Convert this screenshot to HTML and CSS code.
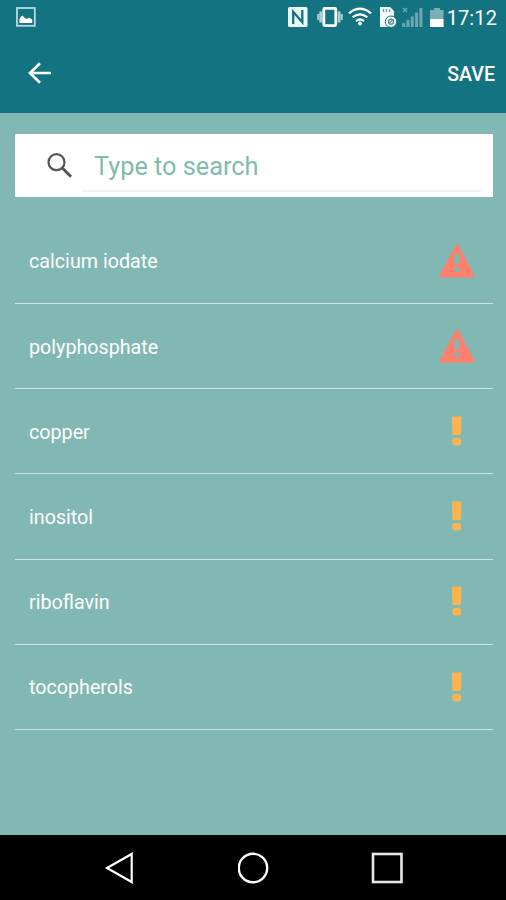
FILE: index.html
```html
<!DOCTYPE html>
<html lang="en">
<head>
<meta charset="utf-8">
<title>Ingredients</title>
<link rel="stylesheet" href="styles.css">
</head>
<body>
<div class="screen">
  <header class="header">
    <div class="status">
      <svg class="picture" width="20" height="20" viewBox="0 0 20 20"><rect x="1" y="1" width="17.8" height="17.8" fill="none" stroke="#b9d9dd" stroke-width="1.8"/><path d="M3.4 16V12L5 9.5 6.5 8.5 9 11 11 12 13 10.5 16.2 12.5V16Z" fill="#fff"/></svg>
      <div class="indicators">
        <svg width="20" height="20" viewBox="0 0 20 20"><rect width="19.5" height="20" rx="1.5" fill="#eaf5f6"/><path d="M5.2 17V4.8L14.3 15.2V3" fill="none" stroke="#137380" stroke-width="2.3"/></svg>
        <svg class="vibrate" width="26" height="20" viewBox="0 0 26 20"><rect x="6.8" y="1.4" width="12" height="17.2" rx="1" fill="none" stroke="#fff" stroke-width="2.8"/><path d="M3.7 4.5V15.5M22.1 4.5V15.5" stroke="#a9d0d5" stroke-width="2.8"/><path d="M1.2 7V13M24.7 7V13" stroke="#a9d0d5" stroke-width="2"/></svg>
        <svg class="wifi" width="24" height="20" viewBox="0 0 24 20"><g fill="none" stroke="#fff" stroke-width="2.3"><path d="M1 6.3Q12 -2.7 23 6.3"/><path d="M4.7 10.4Q12 4.4 19.3 10.4"/><path d="M8.1 14.1Q12 11 15.9 14.1"/></g><circle cx="12" cy="16.5" r="1.9" fill="#fff"/></svg>
        <svg class="card" width="18" height="20" viewBox="0 0 18 20"><path d="M0 0H10L14 4V20H0Z" fill="#f4fafb"/><path d="M3.5 2V5M6.5 2V5M9.5 2V5" stroke="#5c9ca5" stroke-width="1.2"/><circle cx="11" cy="14.7" r="5.7" fill="#fff" stroke="#137380" stroke-width="1"/><circle cx="11" cy="14.7" r="2.5" fill="none" stroke="#3f8b96" stroke-width="1.3"/><path d="M9.2 16.5L12.8 12.9" stroke="#3f8b96" stroke-width="1.1"/></svg>
        <svg class="signal" width="21" height="20" viewBox="0 0 21 20"><path d="M1.7 20V16M6 20V13M10.3 20V9.5M14.6 20V5.5M18.9 20V1" stroke="#6da8b0" stroke-width="3"/><path d="M1 1L5 5M5 1L1 5" stroke="#6da8b0" stroke-width="1.2"/></svg>
        <svg class="battery" width="14" height="20" viewBox="0 0 14 20"><path d="M0 3H4V1H10V3H13.5V20H0Z" fill="#79b0b7"/><path d="M0 12H13.5V20H0Z" fill="#fff"/></svg>
        <span class="clock">17:12</span>
      </div>
    </div>
    <div class="toolbar">
      <svg width="24" height="22" viewBox="0 0 24 22"><path d="M12 1.2L2 11 12 20.8M2.3 11H23" fill="none" stroke="#fff" stroke-width="2.7"/></svg>
      <span class="save">SAVE</span>
    </div>
  </header>
  <main class="content">
    <div class="search">
      <svg width="26" height="26" viewBox="0 0 26 26"><circle cx="9.5" cy="9.2" r="8" fill="none" stroke="#555" stroke-width="2.2"/><path d="M15.3 15L24 23.7" stroke="#555" stroke-width="3"/></svg>
      <div class="field">Type to search</div>
    </div>
    <ul class="list">
      <li><span>calcium iodate</span><svg width="36" height="34" viewBox="0 0 36 34"><path d="M18 2L34 32H2Z" fill="#ff806d" stroke="#ff806d" stroke-width="3" stroke-linejoin="round"/><path d="M15 10.5H20.8L20.3 20.5H15.5ZM15.5 23.5H20.3V28H15.5Z" fill="#82b8b3"/></svg></li>
      <li><span>polyphosphate</span><svg width="36" height="34" viewBox="0 0 36 34"><path d="M18 2L34 32H2Z" fill="#ff806d" stroke="#ff806d" stroke-width="3" stroke-linejoin="round"/><path d="M15 10.5H20.8L20.3 20.5H15.5ZM15.5 23.5H20.3V28H15.5Z" fill="#82b8b3"/></svg></li>
      <li><span>copper</span><svg width="36" height="30" viewBox="0 0 36 30"><path d="M13 .5H22.5L22 19H13.5Z" fill="#ffb34d"/><rect x="13.3" y="22" width="8.8" height="7.4" rx="2.3" fill="#ffb34d"/></svg></li>
      <li><span>inositol</span><svg width="36" height="30" viewBox="0 0 36 30"><path d="M13 .5H22.5L22 19H13.5Z" fill="#ffb34d"/><rect x="13.3" y="22" width="8.8" height="7.4" rx="2.3" fill="#ffb34d"/></svg></li>
      <li><span>riboflavin</span><svg width="36" height="30" viewBox="0 0 36 30"><path d="M13 .5H22.5L22 19H13.5Z" fill="#ffb34d"/><rect x="13.3" y="22" width="8.8" height="7.4" rx="2.3" fill="#ffb34d"/></svg></li>
      <li><span>tocopherols</span><svg width="36" height="30" viewBox="0 0 36 30"><path d="M13 .5H22.5L22 19H13.5Z" fill="#ffb34d"/><rect x="13.3" y="22" width="8.8" height="7.4" rx="2.3" fill="#ffb34d"/></svg></li>
    </ul>
  </main>
  <nav class="navbar">
    <svg width="32" height="32" viewBox="0 0 32 32"><path d="M3 16L27.7 2V30Z" fill="none" stroke="#fff" stroke-width="2.2"/></svg>
    <svg width="32" height="32" viewBox="0 0 32 32"><circle cx="15" cy="16" r="14.2" fill="none" stroke="#fff" stroke-width="2.4"/></svg>
    <svg width="32" height="32" viewBox="0 0 32 32"><rect x="2" y="2" width="28.5" height="28" fill="none" stroke="#e8e8e8" stroke-width="2.6"/></svg>
  </nav>
</div>
</body>
</html>
```
FILE: styles.css
```css
* { box-sizing: border-box; }
body { margin: 0; font-family: Roboto, "Liberation Sans", sans-serif; color: #fff; }
svg { display: block; flex: none; }
.screen { width: 506px; height: 900px; display: flex; flex-direction: column; background: #82b8b3; overflow: hidden; }
.header { height: 113px; background: #137380; flex: none; }
.status { height: 34px; display: flex; justify-content: space-between; align-items: center; padding: 0 9px 0 16px; }
.indicators { display: flex; align-items: center; }
.vibrate { margin-left: 9px; }
.wifi { margin-left: 5px; }
.card { margin-left: 8px; }
.signal { margin-left: 4px; }
.battery { margin-left: 7px; }
.clock { font-size: 20px; line-height: 36px; margin-left: 3px; letter-spacing: 0.1px; padding-top: 1px; }
.toolbar { height: 77px; display: flex; justify-content: space-between; align-items: center; padding: 0 11px 0 28px; }
.save { font-size: 19.6px; font-weight: 500; padding-top: 4px; }
.content { flex: 1; padding: 21px 13px 0 15px; }
.search { height: 63px; background: #fff; display: flex; padding: 0 12px 0 32px; gap: 9px; }
.search svg { margin-top: 19px; }
.field { flex: 1; height: 58px; line-height: 65px; padding-left: 12px; border-bottom: 2px solid #f1f1f1; font-size: 25.3px; color: #7fbcaa; }
.list { list-style: none; margin: 22px 0 0; padding: 0; }
.list li { height: 85.15px; display: flex; justify-content: space-between; align-items: center; padding: 1.6px 18px 0 14px; border-bottom: 1.5px solid #cbe5e3; font-size: 19.7px; }
.list svg { margin-top: -2px; }
.navbar { height: 65px; background: #000; display: flex; justify-content: space-between; align-items: center; padding: 0 103px 0 104px; flex: none; }
```
